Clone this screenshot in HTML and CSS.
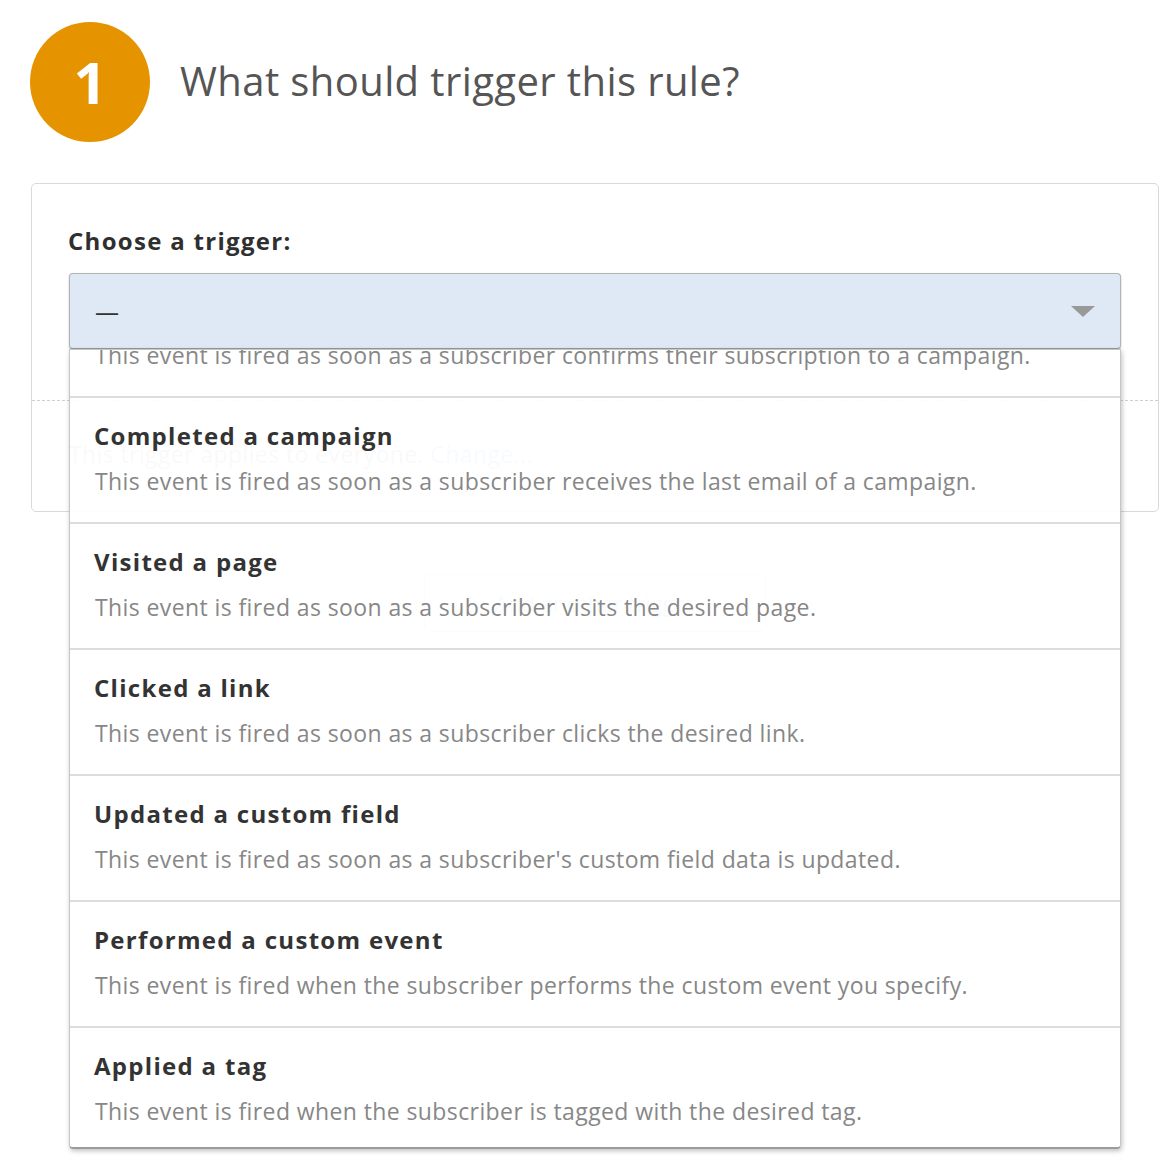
FILE: index.html
```html
<!DOCTYPE html>
<html>
<head>
<meta charset="utf-8">
<link rel="stylesheet" href="styles.css">
</head>
<body>
<div class="page">
  <header class="step">
    <div class="step-num">1</div>
    <h1 class="step-title">What should trigger this rule?</h1>
  </header>

  <section class="card">
    <div class="card-main">
      <label class="field-label">Choose a trigger:</label>
      <div class="select-wrap">
        <div class="select">
          <span class="select-value">—</span>
          <span class="select-arrow"></span>
        </div>
        <div class="dropdown">
          <ul class="options">
            <li class="option">
              <div class="opt-title">Subscribed to a campaign</div>
              <div class="opt-desc">This event is fired as soon as a subscriber confirms their subscription to a campaign.</div>
            </li>
            <li class="option">
              <div class="opt-title">Completed a campaign</div>
              <div class="opt-desc">This event is fired as soon as a subscriber receives the last email of a campaign.</div>
            </li>
            <li class="option">
              <div class="opt-title">Visited a page</div>
              <div class="opt-desc">This event is fired as soon as a subscriber visits the desired page.</div>
            </li>
            <li class="option">
              <div class="opt-title">Clicked a link</div>
              <div class="opt-desc">This event is fired as soon as a subscriber clicks the desired link.</div>
            </li>
            <li class="option">
              <div class="opt-title">Updated a custom field</div>
              <div class="opt-desc">This event is fired as soon as a subscriber's custom field data is updated.</div>
            </li>
            <li class="option">
              <div class="opt-title">Performed a custom event</div>
              <div class="opt-desc">This event is fired when the subscriber performs the custom event you specify.</div>
            </li>
            <li class="option">
              <div class="opt-title">Applied a tag</div>
              <div class="opt-desc">This event is fired when the subscriber is tagged with the desired tag.</div>
            </li>
            <li class="option">
              <div class="opt-title">Removed a tag</div>
              <div class="opt-desc">This event is fired when a tag is removed from the subscriber.</div>
            </li>
          </ul>
        </div>
      </div>
    </div>
    <div class="card-foot">
      <p class="applies">This trigger applies to everyone. <a class="link">Change...</a></p>
    </div>
  </section>

  <div class="add-row">
    <button class="add-btn">Add another trigger</button>
  </div>
</div>
</body>
</html>
```

FILE: styles.css
```css
* { box-sizing: border-box; }
html, body { margin: 0; padding: 0; background: #fff; }
body { font-family: "Open Sans", Lato, sans-serif; color: #333; min-height: 1160px; }

.page { padding: 22px 3px 0 31px; min-height: 1160px; }

.step { display: flex; align-items: center; gap: 30px; margin-left: -1px; }
.step-num {
  width: 120px; height: 120px; border-radius: 50%;
  background: #e59400; color: #fff;
  display: flex; align-items: center; justify-content: center;
  font-weight: 700; font-size: 58px; line-height: 1;
}
.step-title {
  margin: 0 0 4px; font-weight: 400; font-size: 40px; letter-spacing: 0.4px; color: #555;
}

.card {
  margin-top: 41px;
  border: 1px solid #d9d9d9; border-radius: 5px;
  width: 1128px;
}
.card-main { padding: 42px 37px 51px; }
.field-label {
  display: block; font-weight: 700; font-size: 24px; letter-spacing: 1.3px; line-height: 30px; color: #2f2f2f;
  margin-left: -1px;
}
.select-wrap { position: relative; margin-top: 17px; }
.select {
  height: 76px; background: #dee9f5;
  border: 1px solid #b3b3b3; border-bottom-color: #9a9a9a; border-radius: 4px;
  box-shadow: 0 1px 2px rgba(0,0,0,0.25);
  display: flex; align-items: center; justify-content: space-between;
  padding: 0 25px 0 25px;
}
.select-value { font-size: 24px; color: #333; }
.select-arrow {
  width: 0; height: 0;
  border-left: 12px solid transparent; border-right: 12px solid transparent;
  border-top: 11px solid #999;
}

.dropdown {
  position: absolute; left: 0; right: 0; top: 100%; z-index: 10;
  height: 800px; overflow: hidden;
  background: rgba(255,255,255,0.94);
  border: 1px solid #c6c6c6; border-bottom: 2px solid #9b9b9b;
  border-radius: 0 0 4px 4px;
  box-shadow: 1px 2px 5px rgba(0,0,0,0.25);
}
.options { list-style: none; margin: -78px 0 0; padding: 0; }
.option {
  height: 126px; padding: 23px 25px 0;
  border-bottom: 2px solid #dcdcdc;
}
.opt-title { font-weight: 700; font-size: 24px; letter-spacing: 1.3px; line-height: 30px; color: #333; margin-left: -1px; }
.opt-desc { margin-top: 15px; font-size: 23px; letter-spacing: 0.4px; line-height: 30px; color: #878787; }

.card-foot { border-top: 1px dashed #cfcfcf; padding: 38px 37px 42px; }
.applies { margin: 0; font-size: 23px; letter-spacing: 0.4px; line-height: 30px; color: #999; }
.link { color: #8aaedb; }

.add-row { display: flex; justify-content: center; width: 1128px; margin-top: 62px; }
.add-btn {
  width: 342px; height: 58px; font: inherit; font-size: 22px;
  color: #8aaedb; background: #fff; border: 1px solid #ccc; border-radius: 4px;
}
```
